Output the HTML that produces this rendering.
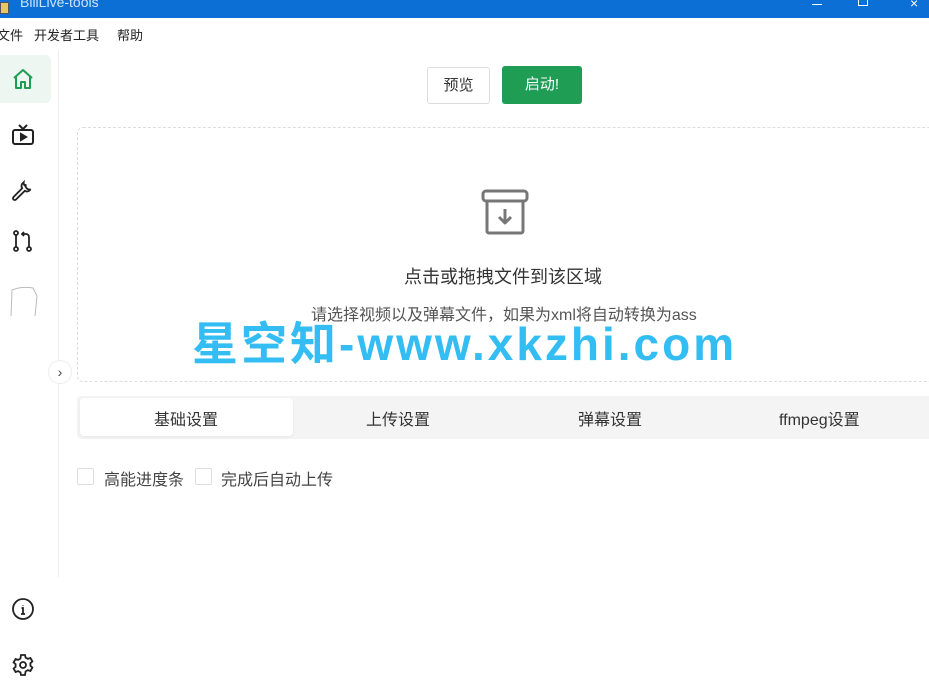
<!DOCTYPE html>
<html><head><meta charset="utf-8"><style>
*{margin:0;padding:0;box-sizing:border-box}
body{width:929px;height:683px;overflow:hidden;background:#fff;font-family:"Liberation Sans","Noto Sans CJK SC",sans-serif;color:#333;position:relative}
.abs{position:absolute}
.tb{left:0;top:0;width:929px;height:18px;background:#0b6fd6}
.menu{top:25px;font-size:13px;color:#222}
.side{left:0;top:50px;width:59px;height:527px;border-right:1px solid #eee}
.t{white-space:nowrap}
</style></head><body>
<div class="abs tb"></div>
<div class="abs t" style="left:20px;top:-6px;color:#cfe3fb;font-size:14px">BiliLive-tools</div>
<div class="abs" style="left:0;top:2px;width:9px;height:12px;background:#e8c66a;border:1px solid #555"></div>
<div class="abs" style="left:812px;top:4px;width:10px;height:1px;background:#fff"></div>
<div class="abs" style="left:858px;top:0px;width:10px;height:6px;border:1px solid #fff;border-top:none"></div>
<div class="abs t" style="left:910px;top:-5px;color:#fff;font-size:14px">×</div>
<div class="abs menu t" style="left:-3px">文件</div>
<div class="abs menu t" style="left:34px">开发者工具</div>
<div class="abs menu t" style="left:117px">帮助</div>
<div class="abs side"></div>
<div class="abs" style="left:0;top:55px;width:51px;height:48px;background:#eef6f1;border-radius:0 6px 6px 0"></div>
<svg class="abs" style="left:11px;top:67px" width="24" height="24" viewBox="0 0 24 24" fill="none" stroke="#1f9d55" stroke-width="2" stroke-linejoin="round"><path d="M3 11 L12 3 L21 11 M5 9 V21 H10 V15 H14 V21 H19 V9"/></svg>
<svg class="abs" style="left:11px;top:123px" width="24" height="24" viewBox="0 0 24 24" fill="none" stroke="#222" stroke-width="2"><rect x="2" y="7" width="20" height="14" rx="2"/><path d="M8 2 L12 6 L16 2"/><path d="M10 11 L15 14 L10 17Z" fill="#222"/></svg>
<svg class="abs" style="left:11px;top:178px" width="24" height="24" viewBox="0 0 24 24" fill="none" stroke="#222" stroke-width="1.8"><path d="M14.7 6.3a4 4 0 0 0 5 5l-1.5 1.5a4 4 0 0 1-4.4 0L5 21.5a1.5 1.5 0 0 1-2.5-2.5l8.7-8.8a4 4 0 0 1 0-4.4l1.5-1.5a4 4 0 0 0 2 4z"/></svg>
<svg class="abs" style="left:11px;top:229px" width="24" height="24" viewBox="0 0 24 24" fill="none" stroke="#222" stroke-width="1.8"><circle cx="5" cy="4" r="2"/><circle cx="5" cy="20" r="2"/><circle cx="18" cy="20" r="2"/><path d="M5 6V18M18 18V8a3 3 0 0 0-3-3H11M13 3L11 5L13 7"/></svg>
<svg class="abs" style="left:7px;top:284px" width="32" height="34" viewBox="0 0 32 34" fill="none" stroke="#bbb" stroke-width="1"><path d="M4 32 L5 6 Q15 2 26 4 L30 12 L28 32"/></svg>
<div class="abs" style="left:48px;top:360px;width:24px;height:24px;border-radius:12px;background:#fff;border:1px solid #eee;text-align:center;line-height:22px;font-size:14px;color:#444">›</div>
<svg class="abs" style="left:11px;top:597px" width="24" height="24" viewBox="0 0 24 24" fill="none" stroke="#222" stroke-width="1.8"><circle cx="12" cy="12" r="10"/><path d="M12 8v.5M10.5 11H12v6M10 17h4"/></svg>
<svg class="abs" style="left:11px;top:653px" width="24" height="24" viewBox="0 0 24 24" fill="none" stroke="#222" stroke-width="1.8"><circle cx="12" cy="12" r="3"/><path d="M10 2h4l.6 2.6 2.3 1.3 2.5-.9 2 3.4-2 1.8v2.6l2 1.8-2 3.4-2.5-.9-2.3 1.3L14 22h-4l-.6-2.6-2.3-1.3-2.5.9-2-3.4 2-1.8v-2.6l-2-1.8 2-3.4 2.5.9 2.3-1.3z"/></svg>
<div class="abs t" style="left:427px;top:67px;width:63px;height:37px;border:1px solid #ddd;border-radius:3px;text-align:center;line-height:35px;font-size:15px;color:#333">预览</div>
<div class="abs t" style="left:502px;top:66px;width:80px;height:38px;background:#1f9d55;border-radius:3px;text-align:center;line-height:38px;font-size:15px;color:#fff">启动!</div>
<div class="abs" style="left:77px;top:127px;width:870px;height:255px;border:1px dashed #ddd;border-radius:6px"></div>
<svg class="abs" style="left:480px;top:187px" width="50" height="50" viewBox="0 0 50 50" fill="none" stroke="#777" stroke-width="3" stroke-linejoin="round"><rect x="3" y="4" width="44" height="10" rx="3"/><path d="M7 14V44a2 2 0 0 0 2 2H41a2 2 0 0 0 2-2V14"/><path d="M25 22V36M19 30L25 36L31 30"/></svg>
<div class="abs t" style="left:404px;top:263px;font-size:18px;color:#333">点击或拖拽文件到该区域</div>
<div class="abs t" style="left:311px;top:301px;font-size:16px;color:#555">请选择视频以及弹幕文件，如果为xml将自动转换为ass</div>
<div class="abs t" style="left:192px;top:308px;font-size:46px;font-weight:bold;color:#33bdf2;letter-spacing:3px">星空知-www.xkzhi.com</div>
<div class="abs" style="left:77px;top:396px;width:860px;height:43px;background:#f4f4f5;border-radius:4px"></div>
<div class="abs" style="left:80px;top:398px;width:213px;height:38px;background:#fff;border-radius:4px;box-shadow:0 1px 3px rgba(0,0,0,.06)"></div>
<div class="abs t" style="left:154px;top:406px;font-size:16px">基础设置</div>
<div class="abs t" style="left:366px;top:406px;font-size:16px">上传设置</div>
<div class="abs t" style="left:578px;top:406px;font-size:16px">弹幕设置</div>
<div class="abs t" style="left:779px;top:406px;font-size:16px">ffmpeg设置</div>
<div class="abs" style="left:77px;top:468px;width:17px;height:17px;border:1px solid #ddd;border-radius:2px"></div>
<div class="abs t" style="left:104px;top:466px;font-size:16px;color:#444">高能进度条</div>
<div class="abs" style="left:195px;top:468px;width:17px;height:17px;border:1px solid #ddd;border-radius:2px"></div>
<div class="abs t" style="left:221px;top:466px;font-size:16px;color:#444">完成后自动上传</div>
</body></html>
